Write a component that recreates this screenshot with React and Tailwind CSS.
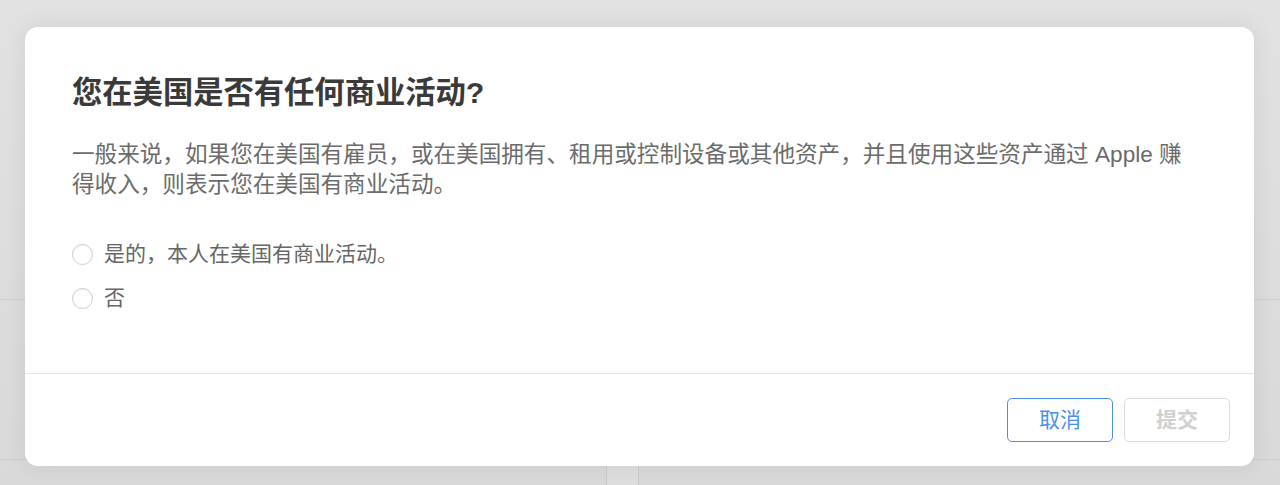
import React from 'react';

function Radio({ label }) {
  return (
    <label className="flex items-center h-[30px] gap-[11px] cursor-pointer">
      <span className="w-[21px] h-[21px] rounded-full border border-[#cccccc] bg-white shadow-[inset_0_1px_1px_rgba(0,0,0,0.06)]" />
      <span className="text-[21px] text-[#666] leading-[30px]">{label}</span>
    </label>
  );
}

export default function App() {
  return (
    <div className="relative w-[1280px] h-[485px] overflow-hidden bg-[#dcdcdc] font-['Liberation_Sans','Noto_Sans_CJK_SC',sans-serif]">
      {/* page behind the overlay */}
      <div className="flex flex-col h-full bg-gradient-to-b from-[#e2e2e2] to-[#d9d9d9]">
        <div className="h-[300px] border-b border-[#cdcdcd]" />
        <div className="h-[160px] border-b border-[#cdcdcd]" />
        <div className="flex flex-1">
          <div className="w-[607px] border-r border-[#c9c9c9]" />
          <div className="w-[32px] border-r border-[#c9c9c9] bg-[#dedede]" />
          <div className="flex-1" />
        </div>
      </div>

      {/* modal */}
      <div className="absolute left-[25px] top-[27px] w-[1229px] h-[439px] bg-white rounded-[13px] shadow-[0_0_24px_rgba(0,0,0,0.08)] flex flex-col">
        <div className="flex-1 pt-[48px] pl-[47px] pr-[50px] pb-[60px] border-b border-[#e6e6e6]">
          <h1 className="text-[30.3px] leading-[36px] font-bold text-[#3a3a3a]">
            您在美国是否有任何商业活动?
          </h1>
          <p className="mt-[29px] text-[22.6px] leading-[30px] text-[#6b6b6b]">
            一般来说，如果您在美国有雇员，或在美国拥有、租用或控制设备或其他资产，并且使用这些资产通过 Apple 赚得收入，则表示您在美国有商业活动。
          </p>
          <div className="mt-[39px] flex flex-col gap-[14px]">
            <Radio label="是的，本人在美国有商业活动。" />
            <Radio label="否" />
          </div>
        </div>
        <div className="flex justify-end gap-[11px] p-[24px]">
          <button className="w-[106px] h-[44px] rounded-[5px] border border-[#4a90e8] text-[21px] text-[#4a90e8]">
            取消
          </button>
          <button className="w-[106px] h-[44px] rounded-[5px] border border-[#dcdcdc] text-[21px] font-bold text-[#d0d0d0]">
            提交
          </button>
        </div>
      </div>
    </div>
  );
}
